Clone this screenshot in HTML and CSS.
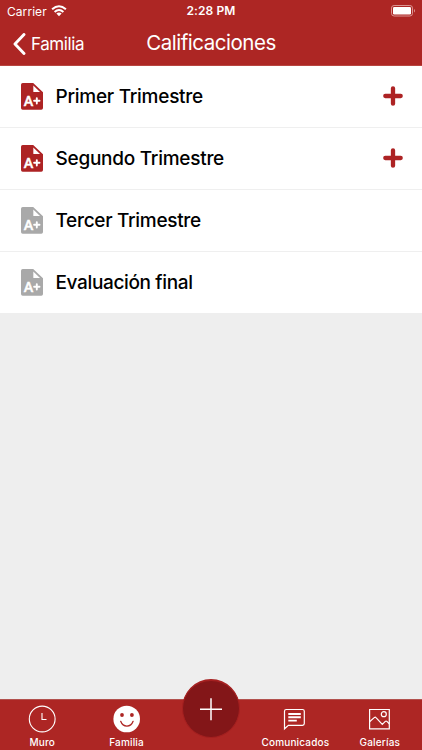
FILE: index.html
```html
<!DOCTYPE html>
<html lang="es">
<head>
<meta charset="utf-8">
<title>Calificaciones</title>
<link rel="stylesheet" href="styles.css">
</head>
<body>
<div class="app">
  <header class="header">
    <div class="status">
      <div class="carrier"><span>Carrier</span>
        <svg width="16" height="12" viewBox="0 0 16 12" fill="none" stroke="#fff" stroke-width="2"><path d="M1.1 4.3Q8-1.9 14.9 4.3M3.6 6.9Q8 3 12.4 6.9"/><path d="M5.4 8.5Q8 6.4 10.6 8.5L8 11.2Z" fill="#fff" stroke="none"/></svg>
      </div>
      <span class="time">2:28 PM</span>
      <svg class="battery" width="24" height="12" viewBox="0 0 24 12"><rect x=".5" y=".5" width="21" height="10.5" rx="2.6" fill="none" stroke="#dc9593"/><rect x="2" y="2" width="18" height="7.5" rx="1.2" fill="#fff"/><path d="M23 4v3.5q1-.7 1-1.75T23 4Z" fill="#dc9593"/></svg>
    </div>
    <div class="nav">
      <div class="back"><svg width="13" height="22" viewBox="0 0 13 22"><path d="M11 1.5L2 11l9 9.5" fill="none" stroke="#fff" stroke-width="2.9" stroke-linecap="round" stroke-linejoin="round"/></svg><span>Familia</span></div>
      <h1>Calificaciones</h1>
    </div>
  </header>
  <main class="list">
    <div class="row">
      <svg class="doc" viewBox="0 0 22 27"><path d="M2 0H12.2L22 9.2V25a1.7 1.7 0 0 1-1.7 1.7H1.7A1.7 1.7 0 0 1 0 25V1.7A1.7 1.7 0 0 1 1.7 0Z" fill="currentColor"/><path d="M12.3 2.6L19 9.1H12.9a.6.6 0 0 1-.6-.6Z" fill="#fff"/><text x="3" y="22.7" class="grade-a">A</text><path d="M15.8 15.1v5.4M13.1 17.8h5.4" stroke="#fff" stroke-width="1.9" stroke-linecap="round"/></svg>
      <span class="label">Primer Trimestre</span>
      <svg class="more" viewBox="0 0 20 20"><path d="M10 2.3v15.4M2.3 10h15.4" stroke="currentColor" stroke-width="4.3" stroke-linecap="round"/></svg>
    </div>
    <div class="row">
      <svg class="doc" viewBox="0 0 22 27"><path d="M2 0H12.2L22 9.2V25a1.7 1.7 0 0 1-1.7 1.7H1.7A1.7 1.7 0 0 1 0 25V1.7A1.7 1.7 0 0 1 1.7 0Z" fill="currentColor"/><path d="M12.3 2.6L19 9.1H12.9a.6.6 0 0 1-.6-.6Z" fill="#fff"/><text x="3" y="22.7" class="grade-a">A</text><path d="M15.8 15.1v5.4M13.1 17.8h5.4" stroke="#fff" stroke-width="1.9" stroke-linecap="round"/></svg>
      <span class="label">Segundo Trimestre</span>
      <svg class="more" viewBox="0 0 20 20"><path d="M10 2.3v15.4M2.3 10h15.4" stroke="currentColor" stroke-width="4.3" stroke-linecap="round"/></svg>
    </div>
    <div class="row">
      <svg class="doc off" viewBox="0 0 22 27"><path d="M2 0H12.2L22 9.2V25a1.7 1.7 0 0 1-1.7 1.7H1.7A1.7 1.7 0 0 1 0 25V1.7A1.7 1.7 0 0 1 1.7 0Z" fill="currentColor"/><path d="M12.3 2.6L19 9.1H12.9a.6.6 0 0 1-.6-.6Z" fill="#fff"/><text x="3" y="22.7" class="grade-a">A</text><path d="M15.8 15.1v5.4M13.1 17.8h5.4" stroke="#fff" stroke-width="1.9" stroke-linecap="round"/></svg>
      <span class="label tight">Tercer Trimestre</span>
    </div>
    <div class="row">
      <svg class="doc off" viewBox="0 0 22 27"><path d="M2 0H12.2L22 9.2V25a1.7 1.7 0 0 1-1.7 1.7H1.7A1.7 1.7 0 0 1 0 25V1.7A1.7 1.7 0 0 1 1.7 0Z" fill="currentColor"/><path d="M12.3 2.6L19 9.1H12.9a.6.6 0 0 1-.6-.6Z" fill="#fff"/><text x="3" y="22.7" class="grade-a">A</text><path d="M15.8 15.1v5.4M13.1 17.8h5.4" stroke="#fff" stroke-width="1.9" stroke-linecap="round"/></svg>
      <span class="label tighter">Evaluación final</span>
    </div>
  </main>
  <footer class="tabs">
    <div class="tab"><svg width="28" height="28" viewBox="0 0 28 28" fill="none" stroke="#fff" stroke-width="1.1"><circle cx="14.2" cy="14" r="12.9"/><path d="M14 8v6.5h4.5"/></svg><span>Muro</span></div>
    <div class="tab"><svg width="28" height="28" viewBox="0 0 28 28"><circle cx="13.7" cy="14" r="13.3" fill="#fff"/><g fill="#ad2624"><circle cx="9" cy="10" r="1.9"/><circle cx="18.9" cy="10" r="1.9"/></g><path d="M7.7 16.3q1.8 4.8 6.2 4.8t6.2-4.8" fill="none" stroke="#ad2624" stroke-width="1.3" stroke-linecap="round"/></svg><span>Familia</span></div>
    <div class="tab"></div>
    <div class="tab"><svg width="28" height="28" viewBox="0 0 28 28" fill="none" stroke="#fff" stroke-width="1.2"><path d="M3.5 23.8V6.2Q3.5 4.5 5.3 4.5H21.5Q23.3 4.5 23.3 6.2V18.6Q23.3 20.3 21.5 20.3H7.4Z"/><path d="M7.3 9h12.5M7.3 12.3h12.5M7.3 15.6h8.5" stroke-width="1.9"/></svg><span>Comunicados</span></div>
    <div class="tab"><svg width="28" height="28" viewBox="0 0 28 28" fill="none" stroke="#fff" stroke-width="1.2"><path d="M3.6 4.5H23.3V23.8H3.6Z"/><circle cx="17.8" cy="9.2" r="2.5"/><path d="M3.6 16.8L8.5 12.4Q9.3 11.8 10 12.6L16.3 19.4L19.3 16.4Q20.1 15.7 20.9 16.4L23.3 18.7"/></svg><span>Galerías</span></div>
    <div class="add"><svg width="24" height="24" viewBox="0 0 24 24"><path d="M12 1.3v22M1 12.3h22" stroke="#fff" stroke-width="1.5"/></svg></div>
  </footer>
</div>
</body>
</html>
```

FILE: styles.css
```css
* { box-sizing: border-box; }
body { margin: 0; font-family: Inter, "Liberation Sans", sans-serif; }
.app { width: 422px; height: 750px; display: flex; flex-direction: column; background: #eee; overflow: hidden; }
.header { height: 66px; background: #ad2624; color: #fff; border-bottom: 1px solid #b84540; flex: none; }
.status { height: 22px; display: grid; grid-template-columns: 1fr auto 1fr; align-items: center; padding: 0 7px; }
.carrier { display: flex; align-items: center; gap: 4px; font-size: 12px; letter-spacing: .06px; }
.carrier svg { margin-top: -1px; }
.time { font-size: 12px; font-weight: 600; letter-spacing: .12px; margin-top: -1px; }
.battery { justify-self: end; margin-top: -1px; }
.nav { height: 42px; display: grid; grid-template-columns: 1fr auto 1fr; align-items: center; }
.back { display: flex; align-items: center; gap: 5px; padding-left: 13px; margin-top: 1px; font-size: 17px; letter-spacing: -.42px; }
h1 { margin: -1px 0 0; font-size: 20.5px; line-height: 26px; font-weight: 400; letter-spacing: -.48px; }
.list { background: #fff; height: 247px; flex: none; }
.row { height: 62px; display: flex; align-items: center; padding: 0 19px 0 21px; border-bottom: 1px solid #efefef; }
.row:last-child { height: 61px; border: 0; }
.doc { width: 22px; height: 27px; color: #ad2324; flex: none; }
.off { color: #a9a9a9; }
.grade-a { font: 700 13px Lato, sans-serif; fill: #fff; stroke: #fff; stroke-width: .5px; }
.label { margin-left: 12.5px; font-size: 19px; line-height: 24px; font-weight: 450; color: #000; letter-spacing: -.26px; white-space: nowrap; }
.tight { letter-spacing: -.3px; }
.tighter { letter-spacing: -.36px; }
.more { width: 20px; height: 20px; color: #ad2324; margin: -1px 0 0 auto; }
.tabs { margin-top: auto; height: 51px; background: #ad2624; border-top: 1px solid #b2514e; color: #fff; display: grid; grid-template-columns: repeat(5, 1fr); position: relative; }
.tab { display: flex; flex-direction: column; align-items: center; padding-top: 5px; font-size: 10px; line-height: 14px; font-weight: 500; letter-spacing: .17px; }
.tab span { margin-top: 2px; }
.add { position: absolute; left: 182px; top: -21px; width: 58px; height: 59px; border-radius: 50%; background: #831618; border: 1px solid #a52020; border-top-width: 2px; display: flex; align-items: center; justify-content: center; }
```
